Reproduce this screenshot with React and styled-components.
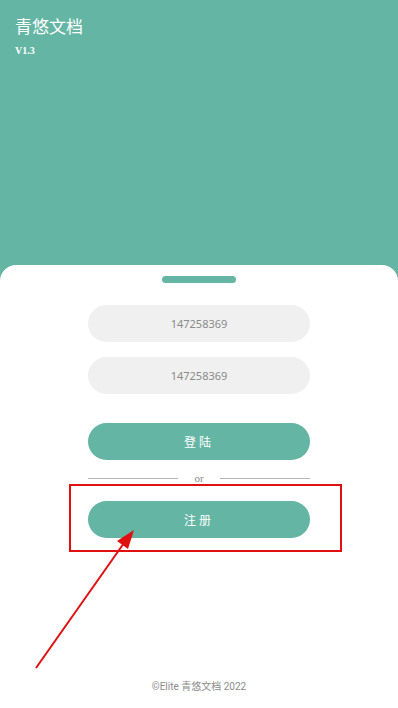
import React from 'react'
import styled, { createGlobalStyle } from 'styled-components'

const teal = '#64b5a3'

const GlobalStyle = createGlobalStyle`
	html, body {
		margin: 0;
		padding: 0;
	}
	body {
		font-family: 'Noto Sans', 'Noto Sans CJK SC', sans-serif;
		background: ${teal};
	}
`

const Page = styled.div`
	position: relative;
	display: flex;
	flex-direction: column;
	min-height: 708px;
	background: ${teal};
	overflow: hidden;
`

const Header = styled.header`
	height: 265px;
	box-sizing: border-box;
	padding: 14px 15px 0;
	color: #fff;
`

const Title = styled.h1`
	margin: 0;
	font-family: 'Noto Sans CJK SC', sans-serif;
	font-weight: 400;
	font-size: 17px;
	line-height: 24px;
`

const Version = styled.div`
	margin-top: 7px;
	font-family: 'Liberation Serif', serif;
	font-weight: bold;
	font-size: 10px;
`

const Sheet = styled.main`
	flex: 1;
	display: flex;
	flex-direction: column;
	align-items: center;
	background: #fff;
	border-radius: 16px 16px 0 0;
	padding-top: 11px;
`

const Handle = styled.div`
	width: 74px;
	height: 7px;
	border-radius: 4px;
	background: ${teal};
	margin-bottom: 22px;
`

const Field = styled.input`
	display: block;
	width: 222px;
	height: 37px;
	box-sizing: border-box;
	border: none;
	outline: none;
	border-radius: 19px;
	background: #f0f0f0;
	text-align: center;
	font-family: 'Noto Sans', sans-serif;
	font-size: 11px;
	color: #8a8a8a;
	margin-bottom: ${p => p.$gap}px;
`

const Button = styled.button`
	display: block;
	width: 222px;
	height: 37px;
	border: none;
	border-radius: 19px;
	background: ${teal};
	color: #fff;
	font-family: 'Noto Sans CJK SC', sans-serif;
	font-size: 12px;
	letter-spacing: 3px;
	cursor: pointer;
`

const Divider = styled.div`
	display: flex;
	align-items: center;
	gap: 16px;
	width: 222px;
	height: 36px;
	margin-bottom: 5px;
	color: #888;
	font-family: 'Liberation Serif', serif;
	font-size: 11px;

	&::before,
	&::after {
		content: '';
		flex: 1;
		height: 1px;
		background: #b5b5b5;
	}
`

const Footer = styled.footer`
	margin-top: auto;
	padding-bottom: 15px;
	font-family: 'Roboto', 'Noto Sans CJK SC', sans-serif;
	font-size: 10px;
	color: #8c8c8c;
`

const Highlight = styled.div`
	position: absolute;
	left: 69px;
	top: 484px;
	width: 273px;
	height: 68px;
	box-sizing: border-box;
	border: 2px solid #e01010;
	pointer-events: none;
`

const Arrow = styled.svg`
	position: absolute;
	left: 0;
	top: 0;
	pointer-events: none;
`

const App = () => (
	<>
		<GlobalStyle />
		<Page>
			<Header>
				<Title>青悠文档</Title>
				<Version>V1.3</Version>
			</Header>
			<Sheet>
				<Handle />
				<Field $gap={15} defaultValue='147258369' />
				<Field $gap={29} defaultValue='147258369' />
				<Button>登陆</Button>
				<Divider>or</Divider>
				<Button>注册</Button>
				<Footer>©Elite 青悠文档 2022</Footer>
			</Sheet>
			<Highlight />
			<Arrow width='398' height='708' viewBox='0 0 398 708'>
				<line x1='36' y1='668' x2='124' y2='543' stroke='#e01010' strokeWidth='2' />
				<polygon points='134,530 117,541 128,549' fill='#e01010' />
			</Arrow>
		</Page>
	</>
)

export default App
